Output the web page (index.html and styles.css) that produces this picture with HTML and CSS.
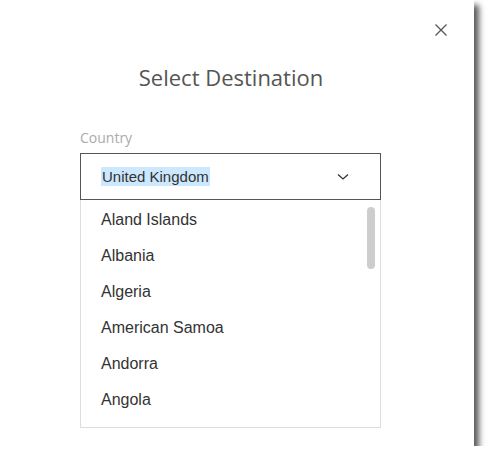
FILE: index.html
```html
<!DOCTYPE html>
<html>
<head>
<meta charset="utf-8">
<link rel="stylesheet" href="styles.css">
</head>
<body>
<div class="dialog">
  <button class="close" aria-label="Close">
    <svg width="14" height="14" viewBox="0 0 14 14"><path d="M1.5 1.5 L12.5 12.5 M12.5 1.5 L1.5 12.5" stroke="#555" stroke-width="1.3" fill="none"/></svg>
  </button>
  <h1 class="title">Select Destination</h1>
  <div class="field">
    <div class="label">Country</div>
    <div class="select">
      <span class="value">United Kingdom</span>
      <svg class="chev" width="12" height="8" viewBox="0 0 12 8"><path d="M1 1.5 L6 6 L11 1.5" stroke="#333" stroke-width="1.3" fill="none"/></svg>
    </div>
    <div class="list">
      <ul class="options">
        <li>Aland Islands</li>
        <li>Albania</li>
        <li>Algeria</li>
        <li>American Samoa</li>
        <li>Andorra</li>
        <li>Angola</li>
      </ul>
      <div class="scrollbar"><div class="thumb"></div></div>
    </div>
  </div>
</div>
</body>
</html>
```
FILE: styles.css
```css
html, body {
  margin: 0;
  padding: 0;
  background: #fff;
}
.dialog {
  position: relative;
  width: 474px;
  height: 446px;
  box-sizing: border-box;
  background: #fff;
  box-shadow: 5px 5px 6px rgba(0,0,0,0.65);
  padding-top: 62px;
}
.close {
  position: absolute;
  left: 434px;
  top: 23px;
  width: 14px;
  height: 14px;
  padding: 0;
  border: 0;
  background: none;
  display: flex;
}
.title {
  margin: 0;
  text-align: center;
  font-family: "Open Sans", sans-serif;
  font-weight: 400;
  font-size: 22px;
  line-height: 30px;
  color: #555;
  padding-right: 12px;
}
.field {
  margin: 36px 0 0 80px;
  width: 301px;
}
.label {
  font-family: "Open Sans", sans-serif;
  font-size: 14px;
  line-height: 19px;
  color: #ababab;
  margin-bottom: 6px;
}
.select {
  height: 47px;
  box-sizing: border-box;
  border: 1px solid #555;
  display: flex;
  align-items: center;
  justify-content: space-between;
  padding: 0 31px 0 20px;
}
.value {
  font-family: "Liberation Sans", Arial, sans-serif;
  font-size: 15px;
  line-height: 19px;
  color: #333;
  background: #cce8ff;
  padding: 0 1px;
}
.list {
  height: 228px;
  box-sizing: border-box;
  border: 1px solid #ddd;
  border-top: 0;
  display: flex;
  justify-content: space-between;
}
.options {
  list-style: none;
  margin: 0;
  padding: 2px 0 0 20px;
  font-family: "Liberation Sans", Arial, sans-serif;
  font-size: 16px;
  color: #333;
}
.options li {
  height: 36px;
  line-height: 36px;
}
.scrollbar {
  padding: 7px 5px 0 0;
}
.thumb {
  width: 8px;
  height: 62px;
  border-radius: 4px;
  background: #cdcdcd;
}
```
